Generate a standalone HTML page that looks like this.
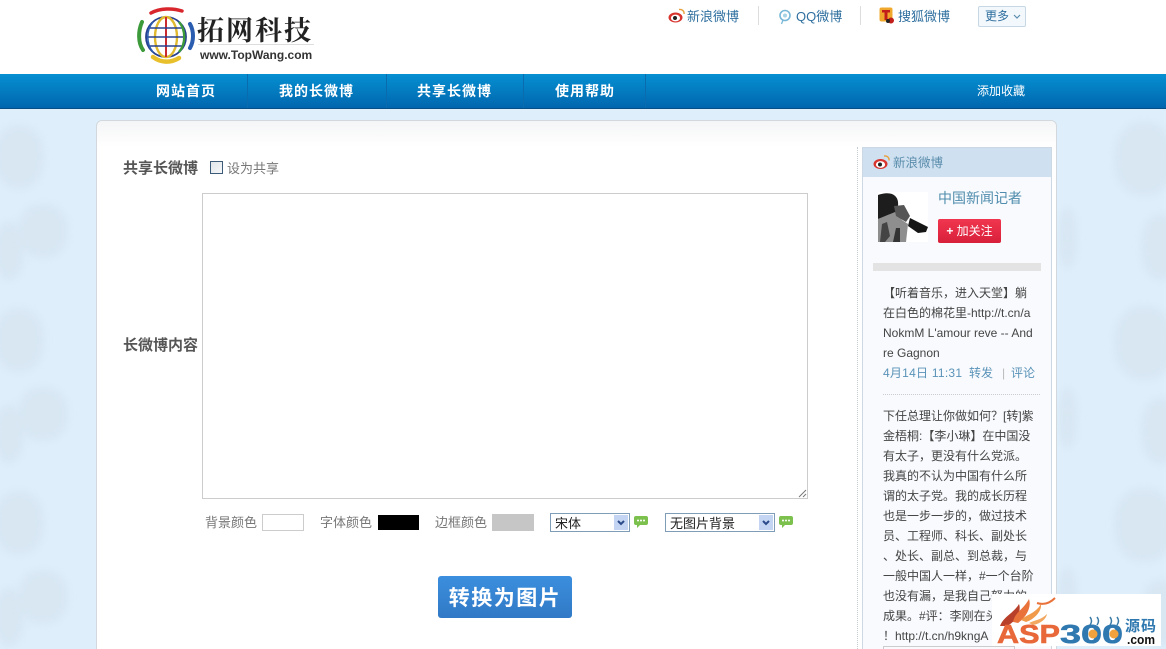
<!DOCTYPE html>
<html lang="zh-CN"><head><meta charset="utf-8"><title>拓网科技</title>
<style>
html,body{margin:0;padding:0;width:1166px;height:649px;overflow:hidden}
body{background:#deeefb;font-family:"Liberation Sans","Noto Sans CJK SC",sans-serif;color:#666}
#w{position:relative;width:1166px;height:649px;overflow:hidden;background:#deeefb}
.a{position:absolute;white-space:nowrap}
.t{font-size:12px;line-height:20px;color:#444;left:883px}
.m{font-size:12px;line-height:20px;color:#5a93b8;top:363px}
.bl{color:#2f6f9f}
.lab{font-size:13px;color:#777;line-height:18px}
.nav{font-size:14px;font-weight:bold;color:#fff;letter-spacing:1px;top:82px;line-height:18px}
.sep{position:absolute;top:74px;width:1px;height:34px;background:#0a6cae}
.blob{position:absolute;border-radius:45%;background:#d6e5f0;filter:blur(4px);opacity:.75}
.sw{position:absolute;height:15px;width:40px}
.sel{position:absolute;top:513px;height:17px;border:1px solid #7f9db9;background:#fff;font-size:13px;color:#222;line-height:18px;padding-left:4px;font-family:"Noto Sans CJK SC",sans-serif}
.arr{position:absolute;right:1px;top:1px;width:14px;height:15px;background:#c3d5f2}
</style></head><body><div id="w">

<!-- background dragons -->
<div class="blob" style="left:-6px;top:125px;width:50px;height:64px"></div>
<div class="blob" style="left:-6px;top:222px;width:30px;height:58px"></div>
<div class="blob" style="left:18px;top:204px;width:50px;height:54px"></div>
<div class="blob" style="left:-6px;top:308px;width:50px;height:64px"></div>
<div class="blob" style="left:-6px;top:405px;width:30px;height:58px"></div>
<div class="blob" style="left:18px;top:387px;width:50px;height:54px"></div>
<div class="blob" style="left:-6px;top:491px;width:50px;height:64px"></div>
<div class="blob" style="left:-6px;top:588px;width:30px;height:58px"></div>
<div class="blob" style="left:18px;top:570px;width:50px;height:54px"></div>
<div class="blob" style="left:1114px;top:122px;width:60px;height:74px"></div>
<div class="blob" style="left:1141px;top:214px;width:40px;height:66px"></div>
<div class="blob" style="left:1114px;top:306px;width:60px;height:74px"></div>
<div class="blob" style="left:1141px;top:398px;width:40px;height:66px"></div>
<div class="blob" style="left:1114px;top:488px;width:60px;height:74px"></div>
<div class="blob" style="left:1141px;top:580px;width:40px;height:66px"></div>
<div class="blob" style="left:1058px;top:208px;width:19px;height:60px"></div>
<div class="blob" style="left:1058px;top:388px;width:19px;height:60px"></div>
<div class="blob" style="left:1058px;top:568px;width:19px;height:60px"></div>

<!-- header -->
<div class="a" style="left:0;top:0;width:1166px;height:74px;background:#fff"></div>
<svg class="a" style="left:135px;top:4px" width="64" height="64" viewBox="0 0 64 64" fill="none">
<path d="M16 9C25 4 38 4 47 7" stroke="#d8262c" stroke-width="3.5" stroke-linecap="round"/>
<path d="M7 18C3 27 3 39 8 46" stroke="#3c9a3a" stroke-width="4" stroke-linecap="round"/>
<path d="M18 53C26 59 36 59 44 54" stroke="#e8c02c" stroke-width="4.5" stroke-linecap="round"/>
<path d="M55 20C59 27 59 37 55 44" stroke="#2a5cb0" stroke-width="4" stroke-linecap="round"/>
<circle cx="31" cy="33" r="20" stroke="#26408f" stroke-width="1.8"/>
<ellipse cx="31" cy="33" rx="11" ry="20" stroke="#e0b92e" stroke-width="2.4"/>
<path d="M31 13V53" stroke="#c92a30" stroke-width="2"/>
<path d="M14 24H48M11 33H51M14 42H48" stroke="#26408f" stroke-width="1.6"/>
<path d="M44 18C51 26 51 40 44 48" stroke="#3c9a3a" stroke-width="2.4"/>
<path d="M18 18C11 26 11 40 18 48" stroke="#2a5cb0" stroke-width="1.6"/>
</svg>
<div class="a" style="left:197px;top:10px;font:bold 27px/38px 'Noto Serif CJK SC',serif;color:#222;letter-spacing:2px">拓网科技</div>
<div class="a" style="left:198px;top:44px;width:116px;height:1px;background:#ddd"></div>
<div class="a" style="left:200px;top:47px;font:bold 12px/16px 'Liberation Sans',sans-serif;color:#333">www.TopWang.com</div>

<svg class="a" style="left:668px;top:7px" width="18" height="17" viewBox="0 0 18 17"><ellipse cx="7.5" cy="10.5" rx="7" ry="5" fill="#d8352f"/><ellipse cx="7.5" cy="11" rx="4.6" ry="3.4" fill="#fff"/><circle cx="7" cy="11" r="2" fill="#222"/><path d="M11 2.5C14 2 16.5 4 16 7" stroke="#e8a13c" stroke-width="1.4" fill="none"/></svg>
<div class="a bl" style="left:687px;top:8px;font-size:13px;line-height:18px">新浪微博</div>
<div class="a" style="left:758px;top:6px;width:1px;height:19px;background:#ddd"></div>
<svg class="a" style="left:778px;top:9px" width="14" height="16" viewBox="0 0 14 16" fill="none"><circle cx="7" cy="6.5" r="5" stroke="#7ab8d8" stroke-width="1.6"/><circle cx="7" cy="6.5" r="2" fill="#a8d2e6"/><path d="M5 11L3.5 15" stroke="#7ab8d8" stroke-width="1.3"/></svg>
<div class="a bl" style="left:796px;top:8px;font-size:13px;line-height:18px">QQ微博</div>
<div class="a" style="left:860px;top:6px;width:1px;height:19px;background:#ddd"></div>
<svg class="a" style="left:879px;top:7px" width="17" height="17" viewBox="0 0 17 17"><rect x="0.5" y="0.5" width="13" height="14" rx="2" fill="#f0a82c"/><path d="M3 3H11V5.5H8.5V13H5.5V5.5H3Z" fill="#c21f1a"/><circle cx="12" cy="13.5" r="3" fill="#c21f1a"/><circle cx="9" cy="14" r="2" fill="#222"/></svg>
<div class="a bl" style="left:898px;top:8px;font-size:13px;line-height:18px">搜狐微博</div>
<div class="a bl" style="left:978px;top:6px;width:46px;height:19px;border:1px solid #c6d8e6;border-radius:2px;background:#f3f8fc;font-size:12px;line-height:19px;text-indent:6px">更多<svg style="position:absolute;left:34px;top:7px" width="8" height="6" viewBox="0 0 8 6" fill="none"><path d="M1 1L4 4L7 1" stroke="#5d8fb0" stroke-width="1.2"/></svg></div>

<!-- nav -->
<div class="a" style="left:0;top:74px;width:1166px;height:34px;background:linear-gradient(#0690d2,#0166ae);border-bottom:1px solid #064f86"></div>
<div class="a nav" style="left:156px">网站首页</div>
<div class="a nav" style="left:279px">我的长微博</div>
<div class="a nav" style="left:417px">共享长微博</div>
<div class="a nav" style="left:555px">使用帮助</div>
<div class="sep" style="left:247px"></div><div class="sep" style="left:386px"></div><div class="sep" style="left:523px"></div><div class="sep" style="left:645px"></div>
<div class="a" style="left:977px;top:82px;color:#fff;font-size:12px;line-height:18px">添加收藏</div>

<!-- card -->
<div class="a" style="left:96px;top:120px;width:959px;height:540px;background:#fff;border:1px solid #d2d8dd;border-radius:6px 6px 0 0"></div>
<div class="a" style="left:97px;top:121px;width:959px;height:26px;background:linear-gradient(#f4f5f6,#fff);border-radius:6px 6px 0 0"></div>

<div class="a" style="left:123px;top:159px;font-size:15px;font-weight:bold;line-height:20px;color:#555">共享长微博</div>
<div class="a" style="left:210px;top:161px;width:11px;height:11px;border:1px solid #3d5a78;background:linear-gradient(135deg,#dfe5ea,#f6f7f8)"></div>
<div class="a lab" style="left:227px;top:160px">设为共享</div>
<div class="a" style="left:123px;top:336px;font-size:15px;font-weight:bold;line-height:20px;color:#555">长微博内容</div>
<div class="a" style="left:202px;top:193px;width:604px;height:304px;border:1px solid #ccc;background:#fff"></div>
<svg class="a" style="left:798px;top:489px" width="9" height="9" viewBox="0 0 9 9" fill="none"><path d="M1 8L8 1M5 8L8 5" stroke="#777"/></svg>

<div class="a lab" style="left:205px;top:514px">背景颜色</div>
<div class="sw" style="left:262px;top:514px;border:1px solid #ccc;background:#fff"></div>
<div class="a lab" style="left:320px;top:514px">字体颜色</div>
<div class="sw" style="left:378px;top:515px;background:#000;width:41px"></div>
<div class="a lab" style="left:435px;top:514px">边框颜色</div>
<div class="sw" style="left:492px;top:514px;background:#c6c6c6;width:42px;height:17px"></div>
<div class="sel" style="left:550px;width:74px">宋体<div class="arr"><svg width="14" height="15" viewBox="0 0 14 15" fill="none" style="display:block"><path d="M4 6L7 9L10 6" stroke="#2b4a8a" stroke-width="2"/></svg></div></div>
<svg class="a" style="left:633px;top:515px" width="16" height="14" viewBox="0 0 16 14"><path d="M3 1H13Q15 1 15 3V8Q15 10 13 10H7L4 13V10H3Q1 10 1 8V3Q1 1 3 1Z" fill="#7cc04e"/><circle cx="5" cy="5.5" r="1" fill="#fff"/><circle cx="8" cy="5.5" r="1" fill="#fff"/><circle cx="11" cy="5.5" r="1" fill="#fff"/></svg>
<div class="sel" style="left:665px;width:104px">无图片背景<div class="arr"><svg width="14" height="15" viewBox="0 0 14 15" fill="none" style="display:block"><path d="M4 6L7 9L10 6" stroke="#2b4a8a" stroke-width="2"/></svg></div></div>
<svg class="a" style="left:778px;top:515px" width="16" height="14" viewBox="0 0 16 14"><path d="M3 1H13Q15 1 15 3V8Q15 10 13 10H7L4 13V10H3Q1 10 1 8V3Q1 1 3 1Z" fill="#7cc04e"/><circle cx="5" cy="5.5" r="1" fill="#fff"/><circle cx="8" cy="5.5" r="1" fill="#fff"/><circle cx="11" cy="5.5" r="1" fill="#fff"/></svg>

<div class="a" style="left:438px;top:576px;width:134px;height:42px;border-radius:3px;background:linear-gradient(#3b8fde,#3179c6);color:#fff;font-size:21px;font-weight:bold;line-height:45px;text-align:center;letter-spacing:1.5px">转换为图片</div>

<!-- sidebar -->
<div class="a" style="left:857px;top:147px;width:0;height:502px;border-left:1px dotted #c5ccd2"></div>
<div class="a" style="left:862px;top:147px;width:188px;height:520px;border:1px solid #ccd9e5;background:#f8fafd"></div>
<div class="a" style="left:863px;top:148px;width:188px;height:29px;background:#cfe1f1"></div>
<svg class="a" style="left:873px;top:154px" width="18" height="16" viewBox="0 0 18 16"><ellipse cx="7.5" cy="10" rx="7" ry="5" fill="#d8352f"/><ellipse cx="7.5" cy="10.5" rx="4.6" ry="3.4" fill="#fff"/><circle cx="7" cy="10.5" r="2" fill="#222"/><path d="M11 2C14 1.5 16.5 3.5 16 6.5" stroke="#e8a13c" stroke-width="1.4" fill="none"/></svg>
<div class="a" style="left:893px;top:154px;font-size:12.5px;line-height:18px;color:#5a8cab">新浪微博</div>
<svg class="a" style="left:878px;top:192px" width="50" height="50" viewBox="0 0 50 50"><rect width="50" height="50" fill="#fff"/><path d="M0 3Q8 0 14 2Q21 5 20 14L17 22L0 27Z" fill="#1d1d1d"/><path d="M0 27L17 20L24 28L30 32L28 50H0Z" fill="#8e8e8e"/><path d="M4 32L9 30L12 44L7 50H2Z" fill="#444"/><path d="M15 50L18 36L22 36L22 50Z" fill="#333"/><path d="M16 14L26 13L32 24L28 30L18 24Z" fill="#555"/><path d="M32 26L50 35L48 40L40 41L30 34Z" fill="#151515"/></svg>
<div class="a" style="left:938px;top:188px;font-size:14px;line-height:20px;color:#4f8cad">中国新闻记者</div>
<div class="a" style="left:938px;top:219px;width:63px;height:24px;border-radius:2px;background:linear-gradient(#f0354f,#d9203a);color:#fff;font-size:12px;line-height:24px;text-align:center"><b>+</b> 加关注</div>
<div class="a" style="left:873px;top:263px;width:168px;height:8px;background:#e3e3e3"></div>

<div class="a t" style="top:283px">【听着音乐，进入天堂】躺</div>
<div class="a t" style="top:303px">在白色的棉花里-http://t.cn/a</div>
<div class="a t" style="top:323px">NokmM L'amour reve -- And</div>
<div class="a t" style="top:343px">re Gagnon</div>
<div class="a m" style="left:883px;letter-spacing:.25px">4月14日 11:31</div>
<div class="a m" style="left:969px">转发</div>
<div class="a m" style="left:1002px;color:#bbb">|</div>
<div class="a m" style="left:1011px">评论</div>
<div class="a" style="left:883px;top:394px;width:157px;border-top:1px dotted #ccc"></div>
<div class="a t" style="top:406px">下任总理让你做如何？[转]紫</div>
<div class="a t" style="top:426px">金梧桐:【李小琳】在中国没</div>
<div class="a t" style="top:446px">有太子，更没有什么党派。</div>
<div class="a t" style="top:466px">我真的不认为中国有什么所</div>
<div class="a t" style="top:486px">谓的太子党。我的成长历程</div>
<div class="a t" style="top:506px">也是一步一步的，做过技术</div>
<div class="a t" style="top:526px">员、工程师、科长、副处长</div>
<div class="a t" style="top:546px">、处长、副总、到总裁，与</div>
<div class="a t" style="top:566px">一般中国人一样，#一个台阶</div>
<div class="a t" style="top:586px">也没有漏，是我自己努力的</div>
<div class="a t" style="top:606px">成果。#评：李刚在头</div>
<div class="a t" style="top:626px">！</div>
<div class="a t" style="top:626px;left:895px">http://t.cn/h9kngA</div>
<div class="a" style="left:883px;top:646px;width:130px;height:6px;border:1px solid #ccc"></div>

<!-- watermark -->
<div class="a" style="left:992px;top:594px;width:169px;height:52px;background:#fff"></div>
<svg class="a" style="left:995px;top:596px" width="168" height="50" viewBox="0 0 168 50">
<path d="M5 30C9 20 18 18 24 8C27 16 20 26 12 30Z" fill="#b8402a"/>
<path d="M18 26C20 16 28 14 34 3C37 12 30 22 23 27Z" fill="#e9713a"/>
<path d="M26 24C32 18 40 18 46 8C47 16 38 24 31 26Z" fill="#f09a4a"/>
<path d="M34 27C40 24 46 24 52 18C51 24 44 28 38 29Z" fill="#f2a860"/>
<path d="M42 7C48 9 54 8 60 2" stroke="#e9713a" stroke-width="2" fill="none"/>
<path d="M95 29q3-4 0-8M102 29q3-4 0-8M115 29q3-4 0-8M122 29q3-4 0-8" stroke="#3a7ba8" stroke-width="1.5" fill="none"/>
<text x="2" y="47" font-family="Liberation Sans" font-weight="bold" font-size="26" fill="#e8683a" stroke="#e8683a" stroke-width=".6" textLength="63" lengthAdjust="spacingAndGlyphs">ASP</text>
<text x="65" y="47" font-family="Liberation Sans" font-weight="bold" font-size="26" fill="#2f78b0" stroke="#2f78b0" stroke-width=".6" textLength="63" lengthAdjust="spacingAndGlyphs">300</text>
<circle cx="98" cy="38" r="4.5" fill="#f2a23c"/><circle cx="119" cy="38" r="4.5" fill="#f2a23c"/>
<text x="130" y="35" font-family="Noto Sans CJK SC" font-weight="bold" font-size="15" fill="#2f78b0" textLength="31">源码</text>
<text x="132" y="48" font-family="Liberation Sans" font-weight="bold" font-size="13" fill="#111" textLength="28" lengthAdjust="spacingAndGlyphs">.com</text>
</svg>
</div></body></html>
